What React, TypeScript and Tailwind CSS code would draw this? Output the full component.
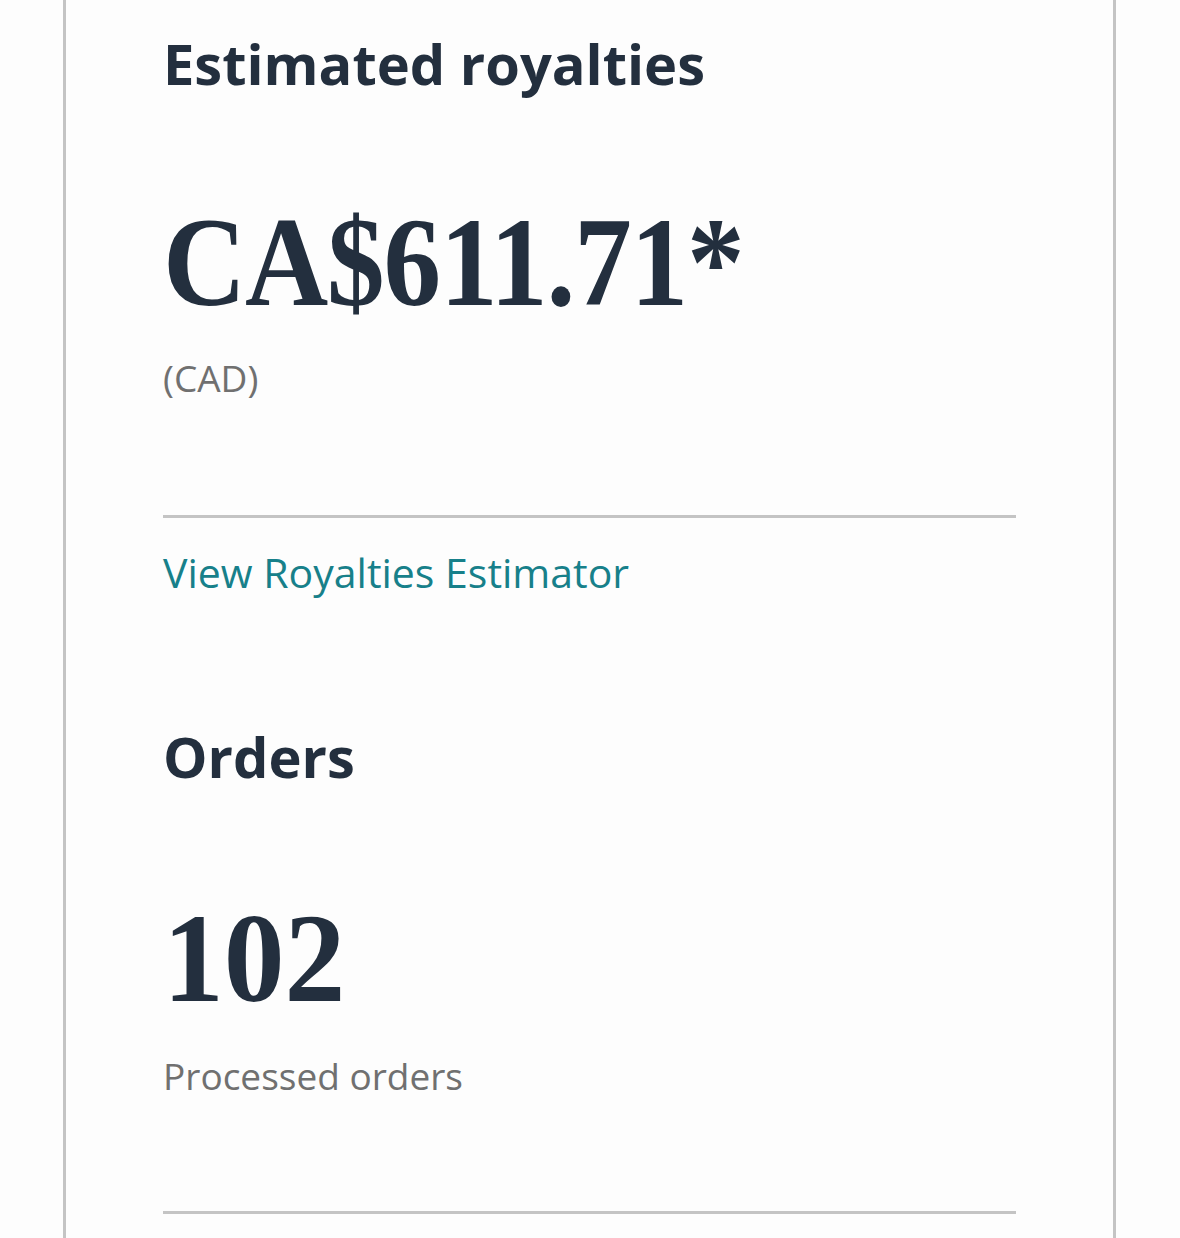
const sans = "font-['Open_Sans',sans-serif]";
const serif = "font-['Liberation_Serif',serif]";

type StatProps = { title: string; value: string; note: string; valueClass: string; gap: string; noteGap: string };

const Stat = ({ title, value, note, valueClass, gap, noteGap }: StatProps) => (
  <div>
    <h2 className={`${sans} text-[56px] leading-[64px] font-bold text-[#232f3e]`}>{title}</h2>
    <div className={`${serif} ${gap} origin-left text-[128px] leading-[128px] font-bold text-[#232f3e] ${valueClass}`}>
      {value}
    </div>
    <p className={`${sans} ${noteGap} text-[37px] leading-[40px] text-[#707070]`}>{note}</p>
  </div>
);

export default function App() {
  return (
    <div className="min-h-[1238px] w-full bg-[#fdfdfd]">
      <div className="ml-[63px] w-[1053px] min-h-[1238px] border-x-[3px] border-[#c4c4c4] px-[97px] pt-[31px]">
        <Stat
          title="Estimated royalties"
          value="CA$611.71*"
          note="(CAD)"
          gap="mt-[103px]"
          noteGap="mt-[32px]"
          valueClass="scale-x-[0.9] tracking-[-0.01em]"
        />
        <hr className="mt-[117px] border-t-[3px] border-[#c4c4c4]" />
        <a href="#" className={`${sans} mt-[30px] block text-[41px] leading-[48px] text-[#17808a]`}>
          View Royalties Estimator
        </a>
        <div className="mt-[128px]">
          <Stat
            title="Orders"
            value="102"
            note="Processed orders"
            gap="mt-[106px]"
            noteGap="mt-[34px]"
            valueClass="scale-x-[0.95]"
          />
        </div>
        <hr className="mt-[115px] border-t-[3px] border-[#c4c4c4]" />
      </div>
    </div>
  );
}
